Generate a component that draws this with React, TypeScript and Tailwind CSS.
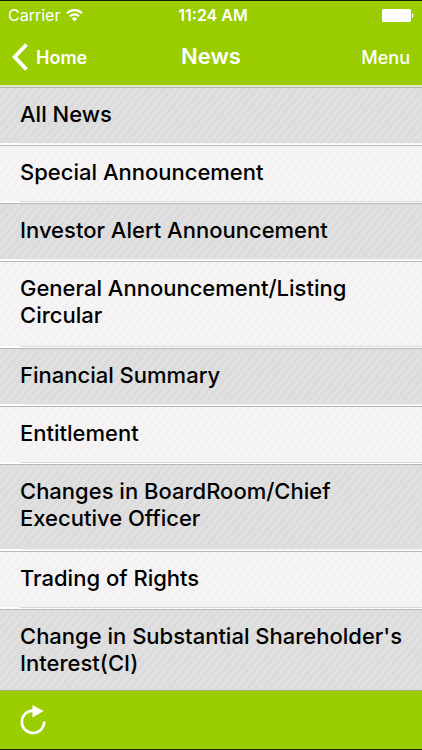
import React from 'react';

interface NewsCategory {
    id: string;
    title: string;
    twoLines?: boolean;
}

const categories: NewsCategory[] = [
    { id: 'all', title: 'All News' },
    { id: 'special', title: 'Special Announcement' },
    { id: 'alert', title: 'Investor Alert Announcement' },
    { id: 'general', title: 'General Announcement/Listing Circular', twoLines: true },
    { id: 'financial', title: 'Financial Summary' },
    { id: 'entitlement', title: 'Entitlement' },
    { id: 'boardroom', title: 'Changes in BoardRoom/Chief Executive Officer', twoLines: true },
    { id: 'rights', title: 'Trading of Rights' },
    { id: 'shareholder', title: "Change in Substantial Shareholder's Interest(CI)", twoLines: true }
];

const StatusBar: React.FC = () => (
    <div className="grid grid-cols-3 items-center h-7 px-2 text-[16px] leading-5">
        <div className="flex items-center gap-1.5">
            <span>Carrier</span>
            <svg width="17" height="13" viewBox="0 0 17 13" fill="none" stroke="currentColor" strokeWidth="2.1" aria-hidden="true">
                <path d="M1 4.2a10.6 10.6 0 0 1 15 0" />
                <path d="M3.8 7.3a6.6 6.6 0 0 1 9.4 0" />
                <path d="M8.5 12.4 5.8 9.7a3.8 3.8 0 0 1 5.4 0z" fill="currentColor" stroke="none" />
            </svg>
        </div>
        <span className="pl-1 text-center font-semibold whitespace-nowrap">11:24 AM</span>
        <svg className="justify-self-end" width="32" height="13" viewBox="0 0 32 13" fill="currentColor" aria-hidden="true">
            <rect x="0" y="0" width="29" height="13" rx="1.5" />
            <path d="M30 4.2c2 .6 2 4 0 4.6z" />
        </svg>
    </div>
);

const CategoryRow: React.FC<{ category: NewsCategory; shaded: boolean }> = ({ category, shaded }) => (
    <li className={`flex flex-col border-t border-t-[#b8b8b8] ${category.twoLines ? 'min-h-[87px]' : 'min-h-[58px]'} ${shaded
        ? 'bg-[#dedede] bg-[repeating-linear-gradient(130deg,#d9d9d9_0px,#e0e0e0_2px,#e0e0e0_4px,#d9d9d9_6px)]'
        : 'bg-[#f4f2f3] bg-[repeating-linear-gradient(130deg,#f1eff0_0px,#f6f4f5_2px,#f6f4f5_4px,#f1eff0_6px)]'}`}
    >
        <button
            type="button"
            className="flex w-full flex-1 items-start pt-[13px] pr-3 pl-5 text-left text-[22px] leading-[27px] font-[550] text-black"
        >
            {category.title}
        </button>
        {/* Inset separator */}
        <div className="bg-white pl-5">
            <div className={shaded ? 'h-px bg-[#f4f4f4]' : 'h-px bg-[#d9d9d9]'} />
        </div>
        <div className="h-px bg-white" />
    </li>
);

const App: React.FC = () => {
    return (
        <div className="flex h-screen flex-col overflow-hidden border-y border-[#102000] bg-[#9acd00] font-['Inter','Liberation_Sans',sans-serif] text-white">
            <header className="shrink-0">
                <StatusBar />
                <nav className="grid h-14 grid-cols-3 items-center px-3">
                    <button type="button" className="flex items-center gap-2 text-lg font-semibold">
                        <svg width="16" height="28" viewBox="0 0 16 28" fill="none" stroke="currentColor" strokeWidth="4" aria-hidden="true">
                            <path d="M14.5 1.5 2.7 14l11.8 12.5" />
                        </svg>
                        <span className="pt-0.5">Home</span>
                    </button>
                    <h1 className="pb-0.5 text-center text-[22px] font-semibold">News</h1>
                    <button type="button" className="justify-self-end pt-0.5 text-lg font-[550]">Menu</button>
                </nav>
            </header>

            <main className="min-h-0 flex-1 overflow-hidden border-t-2 border-[#dfe8c4]">
                <ul>
                    {categories.map((category, index) => (
                        <CategoryRow key={category.id} category={category} shaded={index % 2 === 0} />
                    ))}
                </ul>
            </main>

            <footer className="flex h-[59px] shrink-0 items-center border-t border-[#a3b56a] px-5">
                <button type="button" aria-label="Refresh">
                    <svg width="26" height="30" viewBox="0 0 26 30" fill="none" aria-hidden="true">
                        <path d="M13 5.6A11.2 11.2 0 1 0 24.2 16.6" stroke="currentColor" strokeWidth="2.6" />
                        <path d="M12.5 0v12.5L23.5 6z" fill="currentColor" />
                    </svg>
                </button>
            </footer>
        </div>
    );
};

export default App;
